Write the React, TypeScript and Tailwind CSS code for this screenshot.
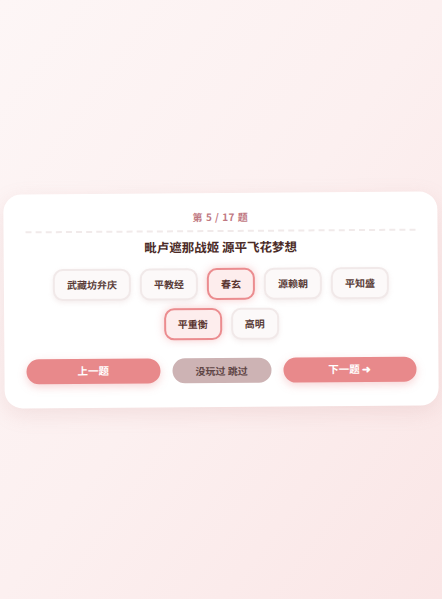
import { useState } from "react";

const OPTIONS = ["武藏坊弁庆", "平教经", "春玄", "源赖朝", "平知盛", "平重衡", "高明"];

export default function App() {
  const [picked, setPicked] = useState<string[]>(["春玄", "平重衡"]);

  const toggle = (name: string) =>
    setPicked(prev => (prev.includes(name) ? prev.filter(n => n !== name) : [...prev, name]));

  return (
    <div
      className="min-h-screen w-full flex items-center justify-center px-1 bg-gradient-to-br from-[#fdf6f6] via-[#fcf0f0] to-[#fae6e6]"
      style={{ fontFamily: '"Noto Sans CJK SC", "Noto Sans", sans-serif' }}
    >
      <div className="w-full -rotate-[0.4deg] rounded-[18px] bg-white px-[22px] pt-[16px] pb-[24px] shadow-[0_6px_20px_rgba(200,140,140,0.18)]">
        <div className="text-center text-[10px] font-bold tracking-wider text-[#bf7882]">
          第 5 / 17 题
        </div>
        <div className="mt-[6px] border-t-2 border-dashed border-[#f1eaea]" />

        <h2 className="mt-[6px] text-center text-[12.5px] font-bold text-[#4a2a26]">
          毗卢遮那战姬 源平飞花梦想
        </h2>

        <div className="mt-[11px] flex flex-wrap justify-center gap-x-[9px] gap-y-2">
          {OPTIONS.map(name => {
            const on = picked.includes(name);
            return (
              <button
                key={name}
                onClick={() => toggle(name)}
                className={
                  on
                    ? "h-8 rounded-[10px] border-2 border-[#eb8c8f] bg-[#fdeded] px-3 text-[10px] font-bold text-[#5a3530] shadow-[0_0_8px_rgba(235,140,143,0.45)]"
                    : "h-8 rounded-[10px] border-2 border-[#f1e9e9] bg-[#fcf9f9] px-3 text-[10px] font-bold text-[#5a3d38] shadow-[0_2px_5px_rgba(200,160,160,0.18)]"
                }
              >
                {name}
              </button>
            );
          })}
        </div>

        <div className="mt-[18px] flex items-center gap-3">
          <button className="h-[25px] flex-1 rounded-full bg-[#e8898b] text-[10.5px] font-bold text-white shadow-[0_3px_8px_rgba(232,137,139,0.35)]">
            上一题
          </button>
          <button className="h-[25px] w-[99px] rounded-full bg-[#cdb3b4] text-[10px] font-bold text-[#5d4444]">
            没玩过 跳过
          </button>
          <button className="h-[25px] flex-1 rounded-full bg-[#e8898b] text-[10.5px] font-bold text-white shadow-[0_3px_8px_rgba(232,137,139,0.35)]">
            下一题 ➜
          </button>
        </div>
      </div>
    </div>
  );
}
